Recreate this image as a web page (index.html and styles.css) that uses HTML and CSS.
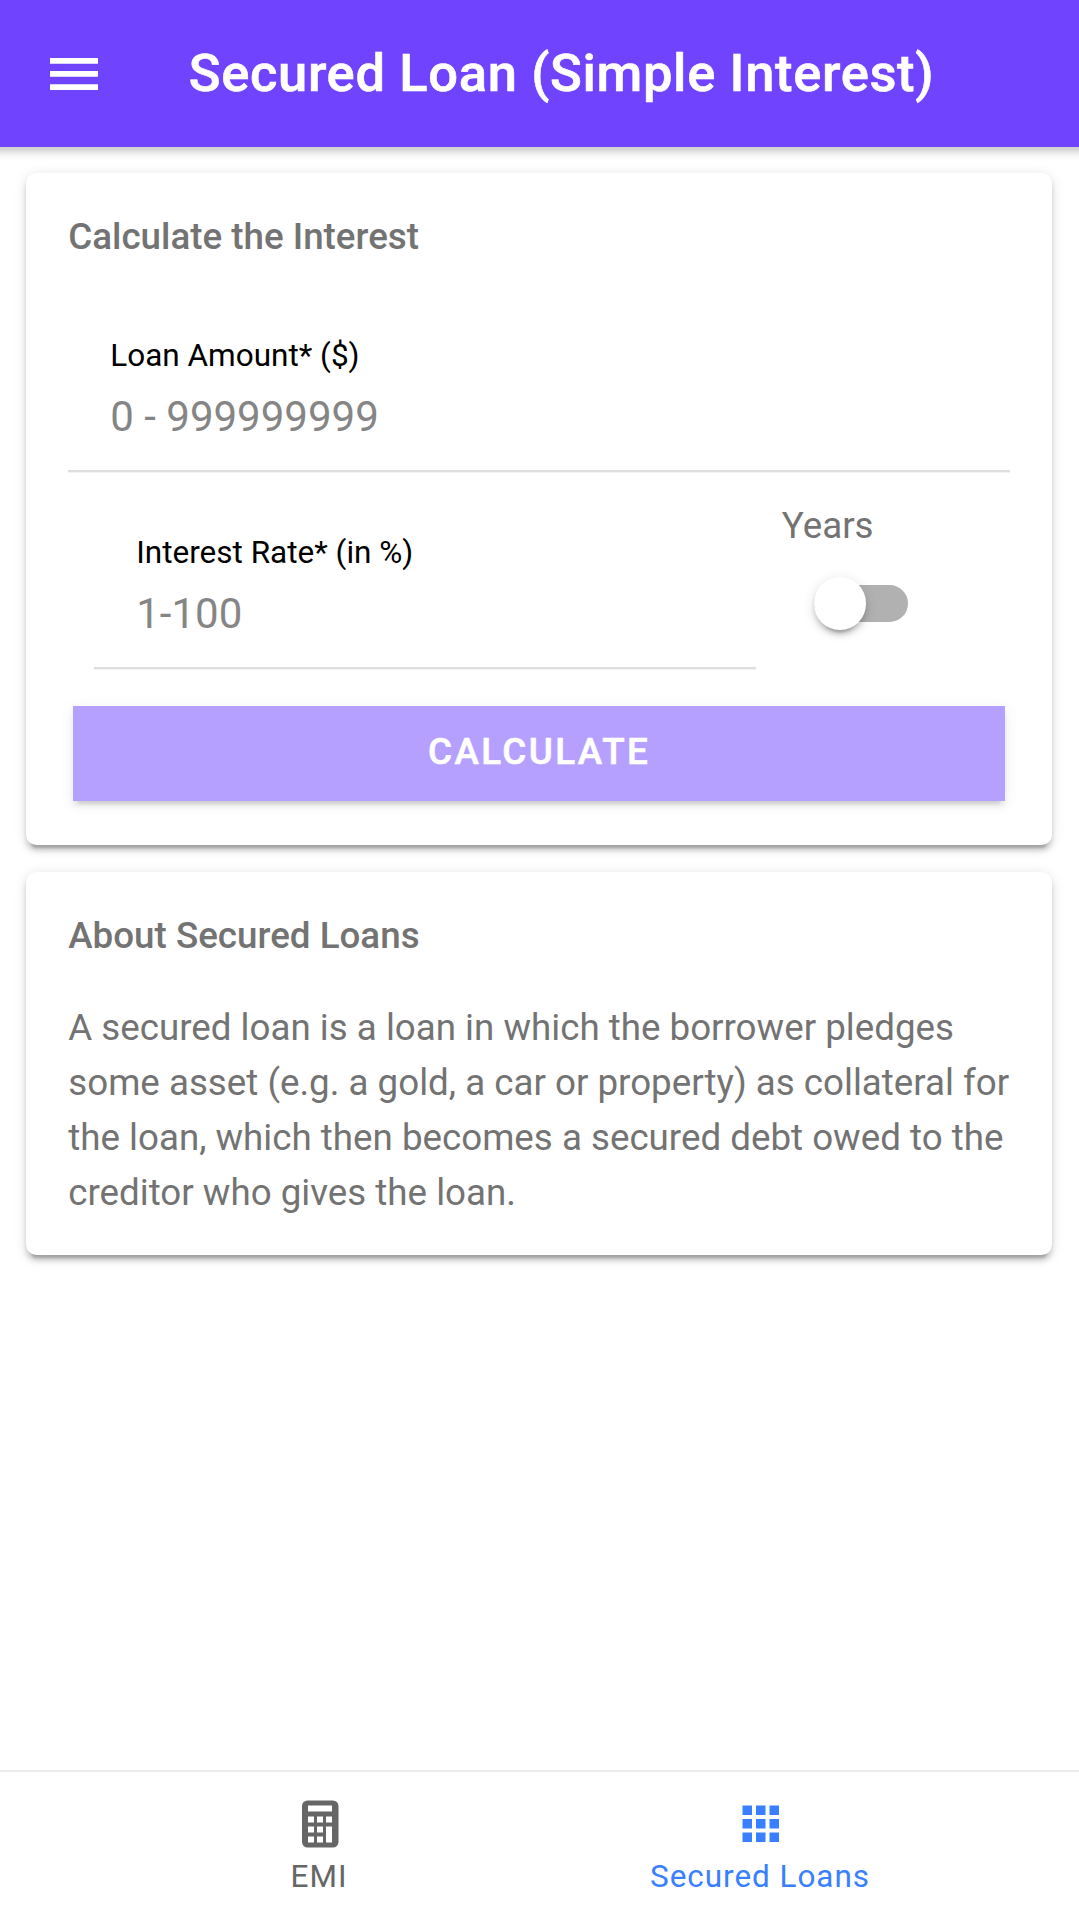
FILE: index.html
```html
<!DOCTYPE html>
<html lang="en">
<head>
<meta charset="utf-8">
<title>Secured Loan (Simple Interest)</title>
<link rel="stylesheet" href="styles.css">
</head>
<body>
<div class="app">
  <header class="toolbar">
    <button class="menu" aria-label="Menu">
      <svg class="menu-icon" viewBox="0 0 48 32"><path fill="#fff" d="M0 0h48v5.7H0zM0 13.1h48v5.7H0zM0 26.2h48v5.7H0z"/></svg>
    </button>
    <h1 class="title">Secured Loan (Simple Interest)</h1>
  </header>

  <main class="content">
    <section class="card card-form">
      <h2 class="card-title">Calculate the Interest</h2>
      <div class="field">
        <label class="label" for="amount">Loan Amount* ($)</label>
        <input class="input" id="amount" placeholder="0 - 999999999">
      </div>
      <div class="row">
        <div class="field field-rate">
          <label class="label" for="rate">Interest Rate* (in %)</label>
          <input class="input" id="rate" placeholder="1-100">
        </div>
        <div class="period">
          <span class="period-name">Years</span>
          <span class="toggle" role="switch" aria-checked="false"><span class="knob"></span></span>
        </div>
      </div>
      <button class="calculate">CALCULATE</button>
    </section>

    <section class="card card-about">
      <h2 class="card-title">About Secured Loans</h2>
      <p class="text">A secured loan is a loan in which the borrower pledges some asset (e.g. a gold, a car or property) as collateral for the loan, which then becomes a secured debt owed to the creditor who gives the loan.</p>
    </section>
  </main>

  <nav class="tabs">
    <a class="tab">
      <svg class="tab-icon" viewBox="0 0 58 58"><path fill="currentColor" fill-rule="evenodd" d="M17.500 5.500h25.500a5.500 5.500 0 0 1 5.500 5.500v36a5.500 5.500 0 0 1-5.500 5.500h-25.500a5.500 5.500 0 0 1-5.500-5.500v-36a5.500 5.500 0 0 1 5.500-5.500zM18 10.500v6h24v-6zM18 21.500v6h6v-6zM27 21.500v6h6v-6zM36 21.500v6h6v-6zM18 31.500v6h6v-6zM27 31.500v6h6v-6zM36 31.500v16h6v-16zM18 41.500v6h6v-6zM27 41.500v6h6v-6z"/></svg>
      <span class="tab-name">EMI</span>
    </a>
    <a class="tab tab-active">
      <svg class="tab-icon" viewBox="0 0 58 58"><path fill="currentColor" d="M11.500 10.500h9.500v9.500h-9.500zM25 10.500h9.500v9.500h-9.500zM38.500 10.500h9.500v9.500h-9.500zM11.500 24h9.500v9.500h-9.500zM25 24h9.500v9.500h-9.500zM38.500 24h9.500v9.500h-9.500zM11.500 37.500h9.500v9.500h-9.500zM25 37.500h9.500v9.500h-9.500zM38.500 37.500h9.500v9.500h-9.500z"/></svg>
      <span class="tab-name">Secured Loans</span>
    </a>
  </nav>
</div>
</body>
</html>
```

FILE: styles.css
```css
* { box-sizing: border-box; }

body {
  margin: 0;
  font-family: Roboto, "Liberation Sans", sans-serif;
  background: #fff;
}

.app {
  display: flex;
  flex-direction: column;
  height: 1919px;
  overflow: hidden;
}

h1, h2, p { margin: 0; }

button {
  border: 0;
  padding: 0;
  font-family: inherit;
}

.toolbar {
  display: flex;
  align-items: center;
  flex: none;
  height: 147px;
  padding: 0 50px;
  background: #7044ff;
}

.menu {
  width: 48px;
  background: none;
}

.menu-icon {
  display: block;
  width: 48px;
  height: 32px;
}

.title {
  flex: 1;
  padding: 0 4px 2px 0;
  font-size: 52.5px;
  font-weight: 500;
  line-height: 64px;
  letter-spacing: 0.65px;
  text-align: center;
  white-space: nowrap;
  color: #fff;
  -webkit-text-stroke: 0.6px #fff;
}

.content {
  flex: 1;
  padding: 26.25px 26.6px 0 26.25px;
  background: linear-gradient(rgba(0, 0, 0, 0.18), rgba(0, 0, 0, 0.17) 2px, rgba(0, 0, 0, 0.08) 6px, rgba(0, 0, 0, 0.02) 10px, transparent 15px);
}

.card {
  padding: 0 42px;
  border-radius: 10.5px;
  background: #fff;
  box-shadow:
    0 7.9px 2.6px -5.25px rgba(0, 0, 0, 0.2),
    0 5.25px 5.25px rgba(0, 0, 0, 0.14),
    0 2.6px 13px rgba(0, 0, 0, 0.12);
}

.card-form { height: 672px; }

.card-about {
  height: 383px;
  margin-top: 26.25px;
}

.card-title {
  padding-top: 42px;
  font-size: 36.75px;
  font-weight: 500;
  line-height: 44px;
  color: #737373;
}

.field {
  display: flex;
  flex-direction: column;
  height: 149px;
  margin-top: 64px;
  padding: 14px 42px 0;
  border-bottom: 2px solid #dedede;
  box-shadow: 0 1px 0 #f3f3f3;
}

.label {
  font-size: 31.5px;
  line-height: 38px;
  color: #000;
}

.input {
  width: 100%;
  height: 56px;
  margin-top: 13px;
  padding: 0;
  border: 0;
  outline: 0;
  background: none;
  font-family: inherit;
  font-size: 42px;
}

.input::placeholder {
  color: #858585;
  opacity: 1;
}

.row {
  display: flex;
  gap: 26px;
  padding-left: 26px;
}

.field-rate {
  width: 661.5px;
  margin-top: 48px;
}

.period {
  display: flex;
  flex-direction: column;
}

.period-name {
  padding-top: 26px;
  font-size: 36.75px;
  line-height: 56px;
  color: #737373;
}

.toggle {
  display: flex;
  align-items: center;
  width: 94.5px;
  height: 36.75px;
  margin: 31px 0 0 32px;
  border-radius: 18.4px;
  background: #b1b1b1;
}

.knob {
  width: 52.5px;
  height: 52.5px;
  border-radius: 50%;
  background: #fff;
  box-shadow:
    0 7.9px 2.6px -5.25px rgba(0, 0, 0, 0.2),
    0 5.25px 5.25px rgba(0, 0, 0, 0.14),
    0 2.6px 13px rgba(0, 0, 0, 0.12);
}

.calculate {
  display: block;
  width: 932px;
  height: 94.5px;
  margin: 37px 0 0 4.9px;
  padding-bottom: 5px;
  background: #7044ff;
  color: #fff;
  font-size: 36.75px;
  font-weight: 500;
  letter-spacing: 2.4px;
  -webkit-text-stroke: 0.6px #fff;
  opacity: 0.5;
  box-shadow:
    0 7.9px 2.6px -5.25px rgba(0, 0, 0, 0.2),
    0 5.25px 5.25px rgba(0, 0, 0, 0.14),
    0 2.6px 13px rgba(0, 0, 0, 0.12);
}

.text {
  margin: 42px -10px 0 0;
  font-size: 36.72px;
  line-height: 55.1px;
  color: #737373;
}

.tabs {
  display: flex;
  justify-content: center;
  flex: none;
  height: 149px;
  border-top: 2px solid #ededed;
}

.tab {
  display: flex;
  flex-direction: column;
  align-items: center;
  width: 441px;
  padding-top: 23px;
  color: #666;
}

.tab-active { color: #3880ff; }

.tab-icon {
  width: 58px;
  height: 58px;
}

.tab-name {
  margin-top: 4.5px;
  font-size: 31.5px;
  line-height: 37px;
  letter-spacing: 0.95px;
}
```
